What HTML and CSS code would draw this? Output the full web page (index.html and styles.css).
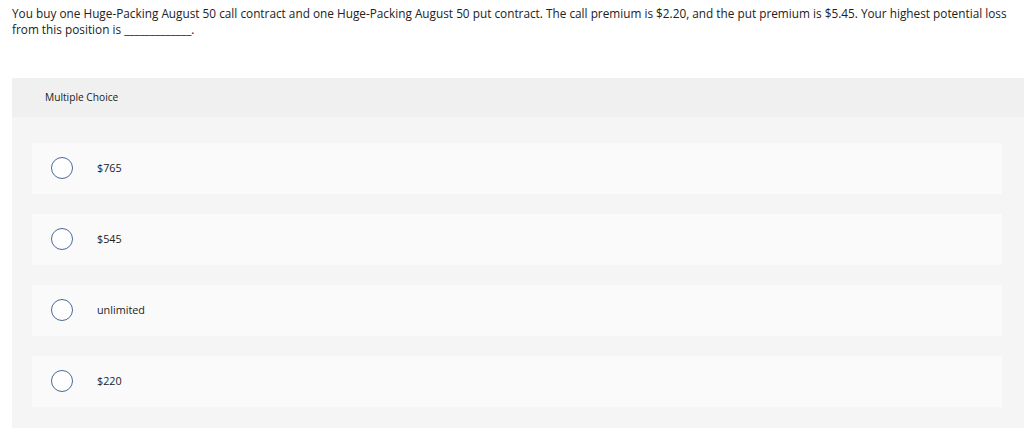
FILE: index.html
```html
<!DOCTYPE html>
<html>
<head>
<meta charset="utf-8">
<link rel="stylesheet" href="styles.css">
</head>
<body>
<div class="question">You buy one Huge-Packing August 50 call contract and one Huge-Packing August 50 put contract. The call premium is $2.20, and the put premium is $5.45. Your highest potential loss from this position is _____________.</div>
<div class="panel">
  <div class="panel-head">Multiple Choice</div>
  <div class="options">
    <div class="option"><span class="radio"></span><span class="label">$765</span></div>
    <div class="option"><span class="radio"></span><span class="label">$545</span></div>
    <div class="option"><span class="radio"></span><span class="label">unlimited</span></div>
    <div class="option"><span class="radio"></span><span class="label">$220</span></div>
  </div>
</div>
</body>
</html>
```
FILE: styles.css
```css
html, body {
  margin: 0;
  padding: 0;
  background: #ffffff;
}
body {
  font-family: "Open Sans", "Liberation Sans", sans-serif;
  color: #222;
  padding-left: 12px;
}
.question {
  font-size: 11.8px;
  line-height: 16px;
  padding-top: 5px;
  padding-right: 10px;
  height: 55px;
  box-sizing: border-box;
}
.panel {
  margin-top: 23px;
  background: #f5f5f5;
  height: 350px;
}
.panel-head {
  background: #f0f0f0;
  height: 39px;
  box-sizing: border-box;
  padding: 12px 0 0 33px;
  font-size: 10.2px;
  color: #222;
}
.options {
  display: flex;
  flex-direction: column;
  gap: 20px;
  padding: 26px 22px 0 20px;
}
.option {
  background: #fafafa;
  height: 51px;
  display: flex;
  align-items: center;
}
.radio {
  width: 20px;
  height: 20px;
  border: 1px solid #4a6a98;
  border-radius: 50%;
  background: #fff;
  margin-left: 19px;
  margin-bottom: 1px;
}
.label {
  margin-left: 24px;
  font-size: 10.8px;
  color: #222;
  margin-bottom: 2px;
}
```
